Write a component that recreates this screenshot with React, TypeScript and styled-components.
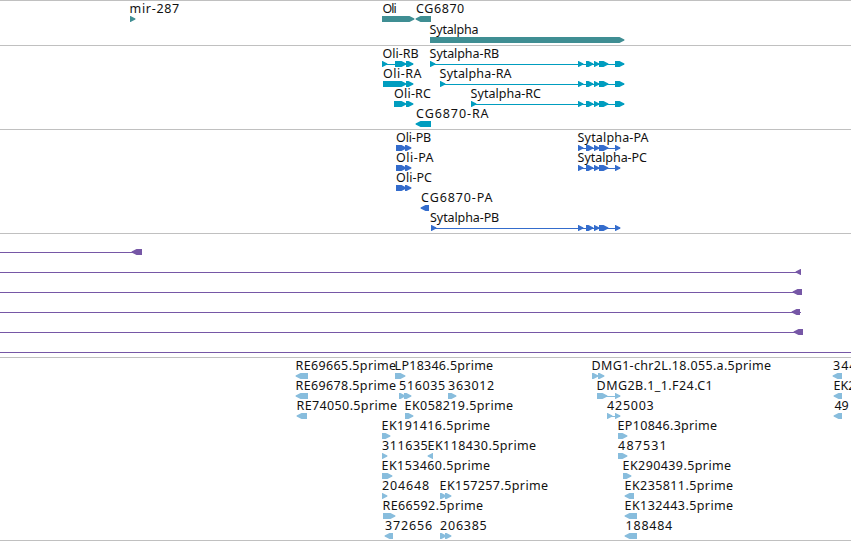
import React from 'react';
import styled, { createGlobalStyle } from 'styled-components';

const FONT_SIZE = 12.5;
const FONT = `${FONT_SIZE}px "Noto Sans", "Open Sans", sans-serif`;

const GlobalStyle = createGlobalStyle`
  html, body { margin: 0; background: #fff; overflow: hidden; }
`;

const Browser = styled.main`
  width: 851px;
  height: 541px;
  display: flex;
  flex-direction: column;
  overflow: hidden;
  background: #fff;
`;

const Track = styled.section<{ $height: number }>`
  position: relative;
  box-sizing: border-box;
  flex: 0 0 ${(p) => p.$height}px;
  border-top: 1px solid #c0c0c0;
  &:last-child { border-bottom: 1px solid #c0c0c0; }
`;

const Lane = styled.div<{ $height?: number }>`
  position: relative;
  height: ${(p) => p.$height ?? 20}px;
`;

const Label = styled.span`
  position: absolute;
  top: -1px;
  font: ${FONT};
  line-height: 17px;
  color: #111;
  white-space: pre;
`;

const Glyphs = styled.svg`
  position: absolute;
  left: 0;
  top: 15px;
  display: block;
`;

type Shape = [start: number, end: number, dir?: 1 | -1];
interface Feature {
  name?: string;
  ink?: [number, number];
  line?: [number, number];
  shapes: Shape[];
}

const ctx = document.createElement('canvas').getContext('2d')!;

/* Fits a label between its first and last inked pixel. */
function fit(name: string, [from, to]: [number, number]) {
  ctx.font = FONT;
  const m = ctx.measureText(name);
  const natural = m.actualBoundingBoxLeft + m.actualBoundingBoxRight;
  const spacing = (to - from - natural) / (name.length - 1);
  return { left: from - 0.4 + m.actualBoundingBoxLeft, letterSpacing: `${spacing.toFixed(3)}px` };
}

function arrow([a, b, dir = 1]: Shape) {
  const head = Math.min(6, b - a);
  return dir === 1
    ? `M${a} 0H${b - head + 0.5}L${b - 0.6} 2.6V3.6L${b - head + 0.5} 6H${a}Z`
    : `M${b} 0H${a + head - 0.5}L${a + 0.6} 2.6V3.6L${a + head - 0.5} 6H${b}Z`;
}

function Row({ items, color, height }: { items: Feature[]; color: string; height?: number }) {
  return (
    <Lane $height={height}>
      {items.map((f, i) => f.name && f.ink && (
        <Label key={i} style={fit(f.name, f.ink)}>{f.name}</Label>
      ))}
      <Glyphs width="851" height="6" fill={color}>
        {items.map((f, i) => (
          <g key={i}>
            {f.line && <rect x={f.line[0]} y="3" width={f.line[1] - f.line[0]} height="1" />}
            {f.shapes.map((s, j) => <path key={j} d={arrow(s)} />)}
          </g>
        ))}
      </Glyphs>
    </Lane>
  );
}

const feat = (name: string, from: number, to: number, shapes: Shape[], line?: [number, number]): Feature =>
  ({ name, ink: [from, to], shapes, line });

const exons: Shape[] = [[578, 584], [586, 594], [594, 600], [599, 609], [615, 625]];
const codingExons: Shape[] = [[578, 584], [586, 594], [594, 600], [599, 609], [615, 621]];

const genes: Feature[][] = [
  [
    feat('mir-287', 131, 179.5, [[130, 136]]),
    feat('Oli', 383, 397, [[382, 415]]),
    feat('CG6870', 416.5, 464.5, [[415, 431, -1]]),
  ],
  [feat('Sytalpha', 430, 478, [[430, 625]])],
];

const transcripts: Feature[][] = [
  [
    feat('Oli-RB', 383, 419, [[382, 388], [395, 407], [406, 414]], [382, 413]),
    feat('Sytalpha-RB', 430, 499.5, [[430, 436], ...exons], [430, 624]),
  ],
  [
    feat('Oli-RA', 383.5, 422, [[383, 407], [406, 414]]),
    feat('Sytalpha-RA', 440, 512, [[440, 446], ...exons], [440, 624]),
  ],
  [
    feat('Oli-RC', 394.5, 431.5, [[394, 407], [406, 414]]),
    feat('Sytalpha-RC', 471, 541.5, [[471, 477], ...exons], [471, 624]),
  ],
  [feat('CG6870-RA', 416.5, 489, [[415, 431, -1]])],
];

const proteins: Feature[][] = [
  [
    feat('Oli-PB', 396.5, 431.5, [[396, 407], [405, 412]]),
    feat('Sytalpha-PA', 578, 649, codingExons, [578, 620]),
  ],
  [
    feat('Oli-PA', 396.5, 434, [[396, 407], [405, 412]]),
    feat('Sytalpha-PC', 578, 647.5, codingExons, [578, 620]),
  ],
  [feat('Oli-PC', 396.5, 432.5, [[396, 407], [405, 412]])],
  [feat('CG6870-PA', 421.5, 493, [[420, 429, -1]])],
  [feat('Sytalpha-PB', 430.5, 499.5, [[431, 437], ...codingExons], [431, 620])],
];

const insertions: Feature[][] = [
  [{ shapes: [[131, 142, -1]], line: [0, 138] }],
  [{ shapes: [[795, 801, -1]], line: [0, 799] }],
  [{ shapes: [[792, 802, -1]], line: [0, 799] }],
  [{ shapes: [[791, 800, -1]], line: [0, 801] }],
  [{ shapes: [[793, 803, -1]], line: [0, 799] }],
  [{ shapes: [], line: [0, 851] }],
];

const ests: Feature[][] = [
  [
    feat('RE69665.5prime', 297, 396.5, [[295, 308, -1]]),
    feat('LP18346.5prime', 396, 493.5, [[395, 406]]),
    feat('DMG1-chr2L.18.055.a.5prime', 593, 771.5, [[592, 599], [598, 605]]),
    feat('344801', 833.5, 879, [[832, 842, -1]]),
  ],
  [
    feat('RE69678.5prime', 297, 396.5, [[295, 308, -1]]),
    feat('516035', 399.5, 445.5, [[399, 406], [404, 412]]),
    feat('363012', 448.5, 494.5, [[448, 457]]),
    feat('DMG2B.1_1.F24.C1', 598, 711, [[597, 608], [615, 621]], [597, 620]),
    feat('EK218735', 835, 891, [[833, 842, -1]]),
  ],
  [
    feat('RE74050.5prime', 298, 397.5, [[296, 307, -1]]),
    feat('EK058219.5prime', 406, 513.5, [[405, 414]]),
    feat('425003', 607.5, 654, [[607, 613], [615, 621]], [607, 620]),
    feat('49', 835, 849, [[833, 842, -1]]),
  ],
  [
    feat('EK191416.5prime', 383, 490.5, [[382, 391]]),
    feat('EP10846.3prime', 619, 717.5, [[618, 628]]),
  ],
  [
    feat('311635', 382.5, 428, [[382, 388]]),
    feat('EK118430.5prime', 429, 536.5, [[427, 433, -1]]),
    feat('487531', 618.5, 665, [[618, 628]]),
  ],
  [
    feat('EK153460.5prime', 383, 490.5, [[382, 393]]),
    feat('EK290439.5prime', 624, 731.5, [[623, 632]]),
  ],
  [
    feat('204648', 382.5, 429.5, [[382, 388]]),
    feat('EK157257.5prime', 441, 548.5, [[440, 447], [445, 452]]),
    feat('EK235811.5prime', 626, 733.5, [[624, 634, -1]]),
  ],
  [
    feat('RE66592.5prime', 384, 483.5, [[383, 396]]),
    feat('EK132443.5prime', 626, 733.5, [[624, 637, -1]]),
  ],
  [
    feat('372656', 385.5, 432.5, [[384, 393, -1]]),
    feat('206385', 440.5, 487, [[440, 447], [445, 452]]),
    feat('188484', 627, 672.5, [[624, 637, -1]]),
  ],
];

export default function App() {
  return (
    <Browser>
      <GlobalStyle />
      <Track $height={45}>
        {genes.map((r, i) => (
          <Row key={i} items={r} color="#3f8e93" height={i === 0 ? 21 : 22} />
        ))}
      </Track>
      <Track $height={84}>
        {transcripts.map((r, i) => <Row key={i} items={r} color="#009dbf" />)}
      </Track>
      <Track $height={104}>
        {proteins.map((r, i) => <Row key={i} items={r} color="#346ccc" />)}
      </Track>
      <Track $height={124}>
        {insertions.map((r, i) => <Row key={i} items={r} color="#7657a6" />)}
      </Track>
      <Track $height={184}>
        {ests.map((r, i) => <Row key={i} items={r} color="#88bddd" />)}
      </Track>
    </Browser>
  );
}
